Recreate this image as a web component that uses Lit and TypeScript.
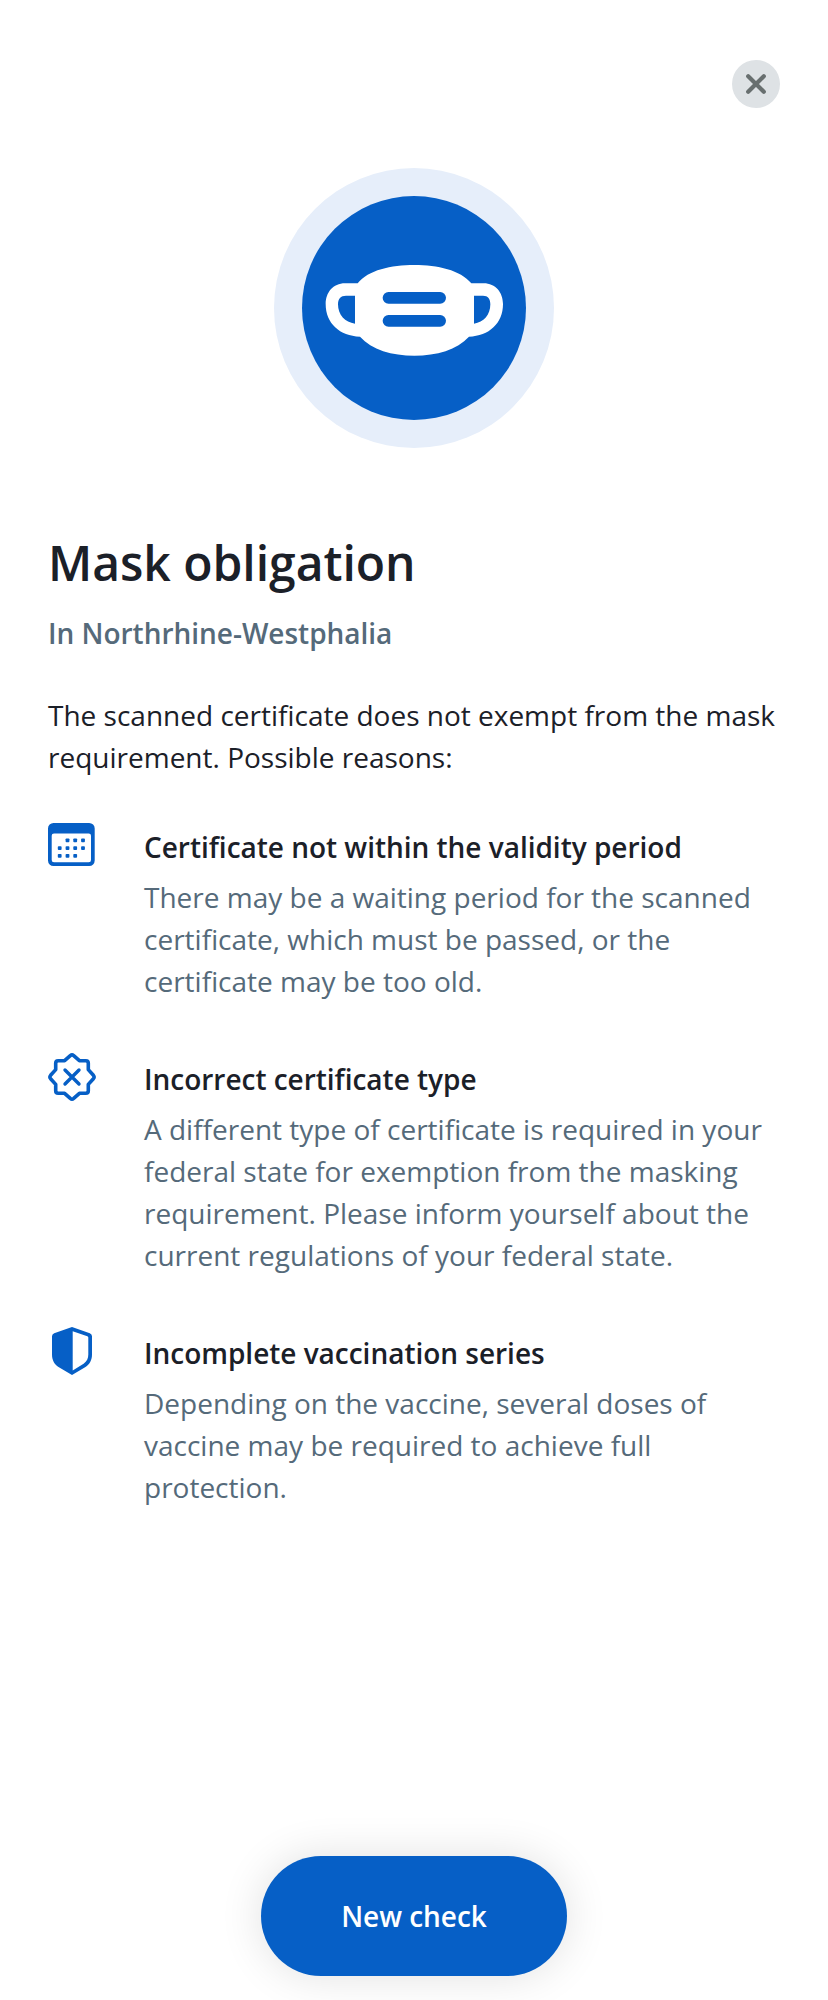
import { LitElement, html, css, svg } from "lit";
import { customElement } from "lit/decorators.js";

const calendarIcon = svg`
  <path fill-rule="evenodd" d="M5.5 2H41.2a5.5 5.5 0 0 1 5.5 5.5V39.5a5.5 5.5 0 0 1-5.5 5.5H5.5A5.5 5.5 0 0 1 0 39.5V7.5A5.5 5.5 0 0 1 5.5 2ZM6 12.5a2.3 2.3 0 0 0-2.3 2.3V39a2.3 2.3 0 0 0 2.3 2.3H40.7A2.3 2.3 0 0 0 43 39V14.800a2.300 2.300 0 0 0-2.300-2.300Z"/>
  ${[[19.5, 19.3], [27.2, 19.3], [35, 19.3], [11.7, 27.1], [19.5, 27.1], [27.2, 27.1], [35, 27.1], [11.7, 34.8], [19.5, 34.8], [27.2, 34.8]].map(
    ([x, y]) => svg`<rect x=${x - 1.9} y=${y - 1.9} width="3.8" height="3.8" rx="0.9"/>`
  )}`;

const badgeIcon = svg`
  <path fill="none" stroke="currentColor" stroke-width="3.6" stroke-linejoin="round"
    d="M22.300 2.600Q24 1.200 25.700 2.600L31.400 7.700H37.800Q40.300 7.700 40.300 10.200V16.600L45.400 22.300Q46.800 24 45.400 25.700L40.300 31.400V37.800Q40.300 40.300 37.800 40.300H31.400L25.700 45.400Q24 46.800 22.300 45.400L16.600 40.300H10.200Q7.700 40.300 7.700 37.800V31.400L2.600 25.700Q1.200 24 2.600 22.300L7.700 16.600V10.200Q7.700 7.700 10.200 7.700H16.600Z"/>
  <path fill="none" stroke="currentColor" stroke-width="3.400" stroke-linecap="round" d="M17 17L31 31M31 17L17 31"/>`;

const shieldIcon = svg`
  <path fill-rule="evenodd" d="M24 0L41.800 6.200Q44 7 44 9.300V27.500C44 33.500 41.500 37.200 37.500 40L24 48L10.500 40C6.500 37.200 4 33.500 4 27.500V9.300Q4 7 6.200 6.200ZM24.700 4.200V43.400L35.600 36.700C38.900 34.400 40.300 31.600 40.300 27.500V10.600Q40.300 9.600 39.300 9.300Z"/>`;

const reasons = [
  {
    icon: calendarIcon,
    title: "Certificate not within the validity period",
    text: "There may be a waiting period for the scanned certificate, which must be passed, or the certificate may be too old.",
  },
  {
    icon: badgeIcon,
    title: "Incorrect certificate type",
    text: "A different type of certificate is required in your federal state for exemption from the masking requirement. Please inform yourself about the current regulations of your federal state.",
  },
  {
    icon: shieldIcon,
    title: "Incomplete vaccination series",
    text: "Depending on the vaccine, several doses of vaccine may be required to achieve full protection.",
  },
];

@customElement("app-root")
export class AppRoot extends LitElement {
  static styles = css`
    :host {
      display: flex;
      flex-direction: column;
      box-sizing: border-box;
      height: 2000px;
      padding: 60px 48px 24px;
      background: #fff;
      color: #1b2028;
      font: 400 28px/42px "Open Sans", sans-serif;
      overflow: hidden;
    }
    h1, h2, h3, p, ul { margin: 0; padding: 0; }
    svg { display: block; }
    button { border: 0; padding: 0; font: inherit; }
    .close {
      align-self: flex-end;
      width: 48px;
      height: 48px;
      border-radius: 50%;
      background: #dee2e5;
      color: #686f6f;
    }
    .hero { align-self: center; margin-top: 60px; }
    h1 { margin-top: 87px; font-size: 48px; line-height: 56px; font-weight: 600; letter-spacing: -0.03px; }
    h2 { margin-top: 21px; font-size: 28px; font-weight: 600; color: #556a7a; letter-spacing: -0.02px; }
    .intro { margin-top: 40px; }
    .reasons {
      display: flex;
      flex-direction: column;
      gap: 56px;
      margin-top: 48px;
      list-style: none;
    }
    .reason { display: flex; gap: 48px; }
    .icon { flex: none; width: 48px; height: 48px; margin-top: -5px; color: #065fc6; fill: currentColor; }
    h3 { font-size: 28px; font-weight: 600; letter-spacing: -0.02px; }
    .text { margin-top: 8px; color: #556a7a; }
    .check {
      align-self: center;
      margin-top: auto;
      width: 306px;
      height: 120px;
      border-radius: 60px;
      background: #065fc6;
      color: #fff;
      font-weight: 600;
      letter-spacing: -0.03px;
      box-shadow: 0 0 44px rgba(0, 0, 0, 0.12);
    }
  `;

  render() {
    return html`
      <button class="close" aria-label="Close">
        <svg width="48" height="48" viewBox="0 0 48 48" fill="none" stroke="currentColor" stroke-width="4.2" stroke-linecap="round">
          <path d="M16.200 16.200L31.800 31.800M31.800 16.200L16.200 31.800" />
        </svg>
      </button>
      <svg class="hero" width="280" height="280" viewBox="42 54 840 840">
        <circle cx="462" cy="474" r="420" fill="#e6eefa" />
        <circle cx="462" cy="474" r="336" fill="#065fc6" />
        <path fill="#fff" fill-rule="evenodd" d="M293 400C325 360 393 345 463 345S601 360 634 400H671C707 400 729 428 729 462C729 520 687 558 627 560C591 599 530 617 463 617S335 599 300 560C239 558 197 520 197 462C197 428 219 400 255 400ZM285 437H258C242 437 234 447 234 463C234 495 255 517 285 521ZM642 437V521C671 517 691 495 691 463C691 447 684 437 669 437Z" />
        <rect x="368" y="426" width="190" height="35" rx="17.500" fill="#065fc6" />
        <rect x="368" y="495" width="190" height="35" rx="17.500" fill="#065fc6" />
      </svg>
      <h1>Mask obligation</h1>
      <h2>In Northrhine-Westphalia</h2>
      <p class="intro">The scanned certificate does not exempt from the mask requirement. Possible reasons:</p>
      <ul class="reasons">
        ${reasons.map(
          (r) => html`<li class="reason">
            <svg class="icon" viewBox="0 0 48 48">${r.icon}</svg>
            <div>
              <h3>${r.title}</h3>
              <p class="text">${r.text}</p>
            </div>
          </li>`
        )}
      </ul>
      <button class="check">New check</button>
    `;
  }
}
